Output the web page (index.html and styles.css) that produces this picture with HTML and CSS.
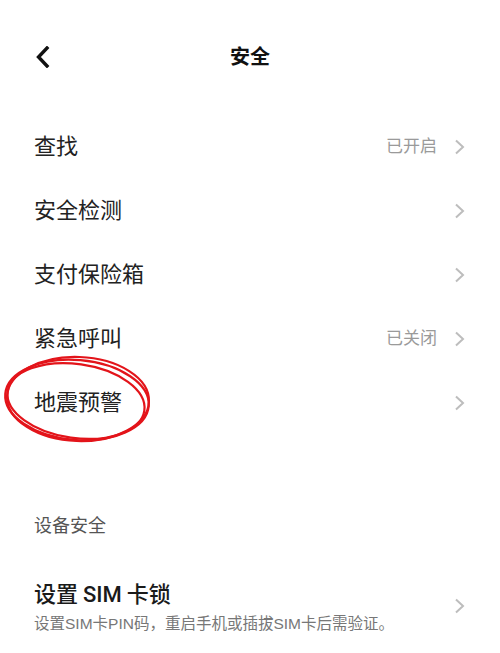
FILE: index.html
```html
<!DOCTYPE html>
<html lang="zh-CN">
<head>
<meta charset="utf-8">
<title>安全</title>
<link rel="stylesheet" href="styles.css">
</head>
<body>
<div class="page">
  <header class="topbar">
    <svg class="back" width="16" height="22" viewBox="0 0 16 22"><path d="M12 2 L3.5 11 L12 20" fill="none" stroke="#111" stroke-width="3.4" stroke-linecap="square" stroke-linejoin="miter"/></svg>
    <div class="title">安全</div>
  </header>
  <ul class="list">
    <li class="row"><span class="label">查找</span><span class="value">已开启</span><svg class="chev" width="12" height="16" viewBox="0 0 12 16"><path d="M2 1.5 L9 8 L2 14.5" fill="none" stroke="#bdbdbd" stroke-width="2"/></svg></li>
    <li class="row"><span class="label">安全检测</span><svg class="chev" width="12" height="16" viewBox="0 0 12 16"><path d="M2 1.5 L9 8 L2 14.5" fill="none" stroke="#bdbdbd" stroke-width="2"/></svg></li>
    <li class="row"><span class="label">支付保险箱</span><svg class="chev" width="12" height="16" viewBox="0 0 12 16"><path d="M2 1.5 L9 8 L2 14.5" fill="none" stroke="#bdbdbd" stroke-width="2"/></svg></li>
    <li class="row"><span class="label">紧急呼叫</span><span class="value">已关闭</span><svg class="chev" width="12" height="16" viewBox="0 0 12 16"><path d="M2 1.5 L9 8 L2 14.5" fill="none" stroke="#bdbdbd" stroke-width="2"/></svg></li>
    <li class="row marked"><span class="label">地震预警</span><svg class="chev" width="12" height="16" viewBox="0 0 12 16"><path d="M2 1.5 L9 8 L2 14.5" fill="none" stroke="#bdbdbd" stroke-width="2"/></svg>
      <svg class="scribble" width="160" height="96" viewBox="0 0 160 96">
        <g fill="none" stroke="#e3141a" stroke-width="2.2">
          <ellipse cx="77" cy="47" rx="72" ry="40" transform="rotate(5 77 47)"/>
          <ellipse cx="76" cy="48" rx="69" ry="37" transform="rotate(8 76 48)"/>
          <ellipse cx="78" cy="46" rx="71" ry="42" transform="rotate(2 78 46)"/>
        </g>
      </svg>
    </li>
  </ul>
  <div class="section-title">设备安全</div>
  <div class="row2">
    <div class="texts">
      <div class="label2">设置 <span class="latin">SIM</span> 卡锁</div>
      <div class="sub">设置SIM卡PIN码，重启手机或插拔SIM卡后需验证。</div>
    </div>
    <svg class="chev" width="12" height="16" viewBox="0 0 12 16"><path d="M2 1.5 L9 8 L2 14.5" fill="none" stroke="#bdbdbd" stroke-width="2"/></svg>
  </div>
</div>
</body>
</html>
```
FILE: styles.css
```css
* { box-sizing: border-box; }
html, body { margin: 0; padding: 0; background: #fff; }
body {
  font-family: "Liberation Sans", "Noto Sans CJK SC", "Noto Sans", sans-serif;
  color: #222;
}
.page { width: 500px; }
.topbar {
  height: 113px;
  display: flex;
  align-items: center;
  position: relative;
  padding-left: 35px;
}
.back { display: block; }
.title {
  position: absolute;
  left: 0; right: 0;
  text-align: center;
  font-size: 20px;
  font-weight: 700;
  line-height: 30px;
  color: #111;
  pointer-events: none;
}
.list { list-style: none; margin: 2px 0 0; padding: 0; }
.row {
  height: 64px;
  display: flex;
  align-items: center;
  padding: 0 34px 0 34px;
  position: relative;
}
.label { font-size: 22px; line-height: 30px; color: #222; flex: 1; }
.value { font-size: 17px; color: #9a9a9a; margin-right: 17px; line-height: 24px; }
.chev { display: block; flex: none; }
.scribble { position: absolute; left: 0; top: -18px; }
.section-title {
  margin-top: 71px;
  padding-left: 34px;
  font-size: 18px;
  line-height: 40px;
  color: #555;
}
.row2 {
  margin-top: 31px;
  display: flex;
  align-items: center;
  padding: 0 34px;
}
.texts { flex: 1; }
.label2 {
  font-family: "Noto Sans CJK SC", sans-serif;
  font-size: 22px;
  line-height: 30px;
  font-weight: 500;
  color: #1a1a1a;
}
.latin { font-family: "Roboto", "Liberation Sans", sans-serif; font-weight: 500; }
.sub { margin-top: 3px; font-size: 15.5px; line-height: 22px; color: #777; }
```
